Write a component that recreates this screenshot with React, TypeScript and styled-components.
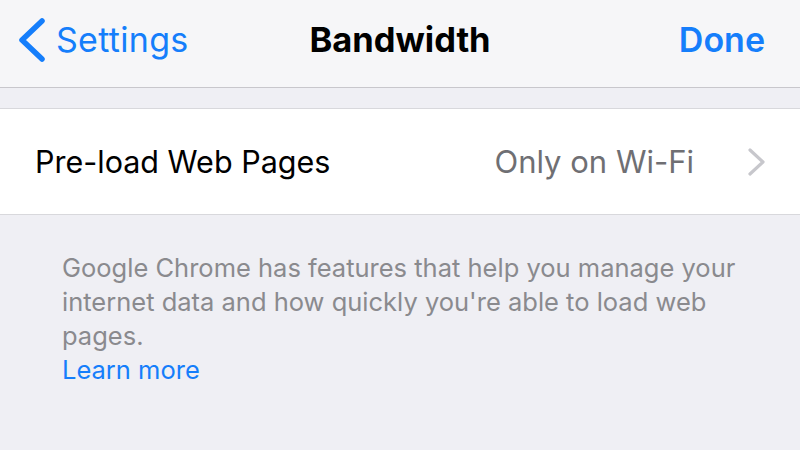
import styled, { createGlobalStyle } from "styled-components";

const GlobalStyle = createGlobalStyle`
  html, body {
    margin: 0;
    padding: 0;
    background: #efeff4;
  }
  body {
    font-family: Inter, "Noto Sans", "Liberation Sans", sans-serif;
    -webkit-font-smoothing: antialiased;
  }
`;

const Screen = styled.div`
  width: 800px;
  height: 450px;
  background: #efeff4;
  overflow: hidden;
`;

const NavBar = styled.div`
  height: 88px;
  box-sizing: border-box;
  display: grid;
  grid-template-columns: 1fr auto 1fr;
  align-items: center;
  background: #f6f6f8;
  border-bottom: 1px solid #c8c7cc;
  padding: 0 35px 8px 35px;
`;

const BackButton = styled.div`
  display: flex;
  align-items: center;
  gap: 10px;
  margin-left: -17px;
  color: #157efb;
  font-size: 34px;
  letter-spacing: 0.3px;
`;

const Title = styled.div`
  font-size: 34.5px;
  font-weight: 700;
  color: #000;
`;

const DoneButton = styled.div`
  justify-self: end;
  font-size: 34px;
  font-weight: 600;
  color: #157efb;
`;

const Group = styled.div`
  margin-top: 20px;
  background: #fff;
  border-top: 1px solid #d8d8dc;
  border-bottom: 1px solid #d8d8dc;
`;

const Row = styled.div`
  height: 105px;
  display: flex;
  align-items: center;
  padding: 0 34px 0 35px;
`;

const RowLabel = styled.div`
  flex: 1;
  font-size: 30.5px;
  color: #000;
`;

const RowValue = styled.div`
  font-size: 31px;
  color: #6f6f73;
  margin-right: 54px;
`;

const Footer = styled.div`
  padding: 36px 50px 0 62px;
  font-size: 25.5px;
  line-height: 34px;
  color: #8a8a8e;
`;

const LearnMore = styled.div`
  color: #157efb;
`;

function BackChevron() {
  return (
    <svg width="28" height="46" viewBox="0 0 28 46">
      <path
        d="M24 4 L4 23 L24 42"
        fill="none"
        stroke="#157efb"
        strokeWidth="5.5"
        strokeLinecap="round"
        strokeLinejoin="round"
      />
    </svg>
  );
}

function Disclosure() {
  return (
    <svg width="18" height="28" viewBox="0 0 18 28">
      <path
        d="M2 2 L15 14 L2 26"
        fill="none"
        stroke="#c7c7cc"
        strokeWidth="3.2"
        strokeLinecap="round"
        strokeLinejoin="round"
      />
    </svg>
  );
}

export default function App() {
  return (
    <Screen>
      <GlobalStyle />
      <NavBar>
        <BackButton>
          <BackChevron />
          Settings
        </BackButton>
        <Title>Bandwidth</Title>
        <DoneButton>Done</DoneButton>
      </NavBar>
      <Group>
        <Row>
          <RowLabel>Pre-load Web Pages</RowLabel>
          <RowValue>Only on Wi-Fi</RowValue>
          <Disclosure />
        </Row>
      </Group>
      <Footer>
        Google Chrome has features that help you manage your internet data
        and how quickly you're able to load web pages.
        <LearnMore>Learn more</LearnMore>
      </Footer>
    </Screen>
  );
}
